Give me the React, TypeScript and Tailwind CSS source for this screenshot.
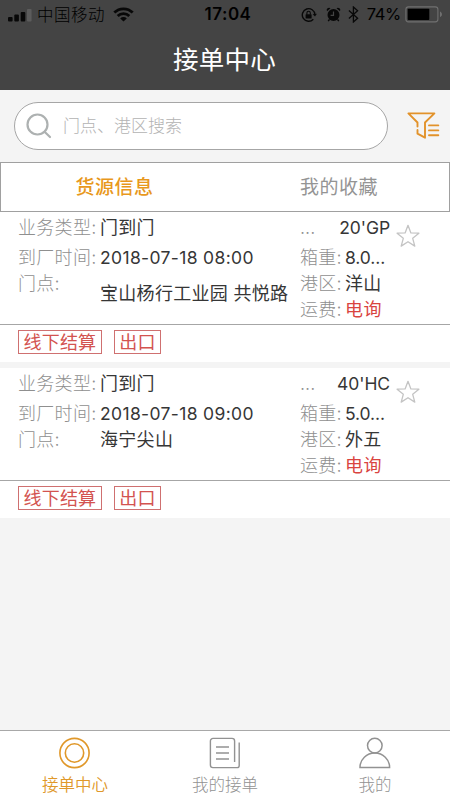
import type { ReactNode } from "react";
import clsx from "clsx";

type Order = {
  id: number;
  type: string;
  time: string;
  place: string;
  offset?: boolean;
  box: string;
  weight: string;
  port: string;
  fee: string;
  tags: string[];
};

const orders: Order[] = [
  {
    id: 1,
    type: "门到门",
    time: "2018-07-18 08:00",
    place: "宝山杨行工业园 共悦路",
    offset: true,
    box: "20'GP",
    weight: "8.0...",
    port: "洋山",
    fee: "电询",
    tags: ["线下结算", "出口"],
  },
  {
    id: 2,
    type: "门到门",
    time: "2018-07-18 09:00",
    place: "海宁尖山",
    box: "40'HC",
    weight: "5.0...",
    port: "外五",
    fee: "电询",
    tags: ["线下结算", "出口"],
  },
];

function StatusBar() {
  return (
    <div className="grid h-[29px] grid-cols-[1fr_auto_1fr] items-center pl-2 pr-[7px] text-[16.5px] text-black">
      <div className="flex items-center">
        <svg width="24" height="14" viewBox="0 0 24 14" fill="#080808">
          <rect x="0" y="9" width="4.6" height="4.5" rx="1" />
          <rect x="6.3" y="6.5" width="4.6" height="7" rx="1" />
          <rect x="12.7" y="4" width="4.6" height="9.5" rx="1" />
          <rect x="19" y="1" width="4.6" height="12.5" rx="1" fill="#5c5c5c" />
        </svg>
        <span className="ml-[5px] pt-0.5 font-light tracking-[0.5px]">中国移动</span>
        <svg className="ml-2" width="21" height="15" viewBox="0 0 21 15" fill="none" stroke="#080808" strokeWidth="2.8">
          <path d="M1.3 5.6a13 13 0 0 1 18.4 0" />
          <path d="M4.7 9.1a8.2 8.2 0 0 1 11.6 0" />
          <path d="M10.5 14.6 7.2 11.4a4.7 4.7 0 0 1 6.6 0Z" fill="#080808" stroke="none" />
        </svg>
      </div>
      <span className="pl-[5px] text-[17px] font-semibold tracking-[0.5px]">17:04</span>
      <div className="flex items-center justify-end">
        <svg width="16" height="16" viewBox="0 0 16 16" fill="none" stroke="#080808" strokeWidth="1.4">
          <path d="M12.3 12.2a6.3 6.3 0 1 1 1.6-4.6" />
          <path d="m11.7 7.2 2.3 2.4 1.9-2.8Z" fill="#080808" stroke="none" />
          <rect x="4.6" y="7.2" width="6" height="4.3" rx="0.6" fill="#080808" stroke="none" />
          <path d="M5.9 7.4V6a1.7 1.7 0 0 1 3.4 0v1.4" strokeWidth="1.1" />
        </svg>
        <svg className="ml-[9px]" width="15" height="15" viewBox="0 0 15 15" fill="#080808">
          <circle cx="7.5" cy="8" r="6" />
          <path d="M1 4.3A2.4 2.4 0 0 1 4.5 1.2ZM14 4.3a2.4 2.4 0 0 0-3.5-3.1Z" />
          <path d="m3.4 12.5-1.2 1.7M11.6 12.5l1.2 1.7" stroke="#080808" strokeWidth="1.4" />
          <path d="M7.5 4.4V8.3H4.6" fill="none" stroke="#444" strokeWidth="1.2" />
        </svg>
        <svg className="ml-[7px]" width="11" height="17" viewBox="0 0 11 17" fill="none" stroke="#080808" strokeWidth="1.3">
          <path d="M0.9 4.6 9.6 12.2 5.4 16V1l4.2 3.8L0.9 12.4" />
        </svg>
        <span className="ml-[8px] tracking-[-0.3px]">74%</span>
        <svg className="ml-1" width="38" height="17" viewBox="0 0 38 17">
          <rect x="0.9" y="0.9" width="32" height="15" rx="2.6" fill="none" stroke="#707070" strokeWidth="1.1" />
          <rect x="2.7" y="2.8" width="21.6" height="11.2" rx="0.8" fill="#000" />
          <path d="M35 5.6c2.6 1 2.6 4.6 0 5.6Z" fill="#707070" />
        </svg>
      </div>
    </div>
  );
}

function Label({ children }: { children: ReactNode }) {
  return <span className="font-light text-[#8f8f8f]">{children}</span>;
}

function Star() {
  return (
    <svg width="24" height="24" viewBox="0 0 24 24" fill="none" stroke="#c4c4c4" strokeWidth="1.3" strokeLinejoin="round">
      <path d="m12 1.3 2.9 7.6 8 .3-6.2 5.1 2.1 7.8-6.8-4.4-6.8 4.4 2.1-7.8L1.1 9.2l8-.3Z" />
    </svg>
  );
}

function OrderCard({ order }: { order: Order }) {
  return (
    <section className="h-[150px] bg-white">
      <div className="flex h-[113px] border-b border-[#a6a6a6] pl-[18px] text-[18px] leading-[26px] text-[#363636]">
        <div className="grid w-[282px] grid-cols-[82px_1fr] grid-rows-[30px_26px_26px] whitespace-nowrap pt-[3px] tracking-[0.3px]">
          <Label>业务类型:</Label>
          <span>{order.type}</span>
          <Label>到厂时间:</Label>
          <span className="text-[17.5px] tracking-[0.35px]">{order.time}</span>
          <Label>门点:</Label>
          <span className={clsx(order.offset && "pt-2.5")}>{order.place}</span>
        </div>
        <div className="w-[90px] pt-[3px]">
          <div className="flex h-[30px] justify-between">
            <Label>...</Label>
            <span className="text-[17.5px] tracking-[-0.1px]">{order.box}</span>
          </div>
          <div className="grid grid-cols-[45px_1fr] grid-rows-[26px_26px_26px] whitespace-nowrap tracking-[0.3px]">
            <Label>箱重:</Label>
            <span className="text-[17.5px] tracking-[-0.1px]">{order.weight}</span>
            <Label>港区:</Label>
            <span>{order.port}</span>
            <Label>运费:</Label>
            <span className="tracking-[0.6px] text-[#d9443f]">{order.fee}</span>
          </div>
        </div>
        <div className="ml-[6px] pt-3">
          <Star />
        </div>
      </div>
      <div className="flex gap-3 pl-[18px] pt-[5px]">
        {order.tags.map((tag) => (
          <span
            key={tag}
            className="flex h-6 items-center border border-[#cf7070] px-[4.5px] pt-px text-[18px] leading-none tracking-[0.2px] text-[#d35350]"
          >
            {tag}
          </span>
        ))}
      </div>
    </section>
  );
}

function NavItem({ label, active, children }: { label: string; active?: boolean; children: ReactNode }) {
  return (
    <div className={clsx("flex flex-col items-center pt-[5px]", active ? "text-[#e0982a]" : "text-[#929292]")}>
      {children}
      <span className={clsx("mt-[3px] text-[16.5px] leading-[24px]", active ? "font-[350]" : "font-light")}>{label}</span>
    </div>
  );
}

export default function App() {
  return (
    <div className="flex h-[800px] w-[450px] flex-col overflow-hidden bg-[#f4f4f4] font-['Inter','Noto_Sans_CJK_SC',sans-serif]">
      <header className="h-[90px] bg-[#444]">
        <StatusBar />
        <h1 className="mt-[12px] pr-px text-center text-[25.5px] leading-[38px] tracking-[0.2px] text-white">接单中心</h1>
      </header>

      <div className="flex h-[72px] items-center pl-[14px]">
        <div className="flex h-12 w-[374px] items-center rounded-full border border-[#a6a6a6] bg-white pl-[11px]">
          <svg width="26" height="26" viewBox="0 0 26 26" fill="none" stroke="#adb1b1" strokeWidth="2.2" strokeLinecap="round">
            <circle cx="11.5" cy="11.5" r="10" />
            <path d="m18.8 19 5.2 5" />
          </svg>
          <span className="ml-[11px] pt-0.5 text-[17px] font-light text-[#b3b3b3]">门点、港区搜索</span>
        </div>
        <svg
          className="ml-[18px]"
          width="35"
          height="30"
          viewBox="0 0 35 30"
          fill="none"
          stroke="#e2922a"
          strokeWidth="1.9"
          strokeLinecap="round"
          strokeLinejoin="round"
        >
          <path d="M11.5 15.5v-4L2.4 2.4h26L19 11.5v15.2l-7.5-4V19" />
          <path d="M23 14.4h9.3M23 19.4h9.3M23 24.2h9.3" />
        </svg>
      </div>

      <div className="grid h-[50px] grid-cols-2 border border-[#a0a0a0] bg-white pt-px text-center text-[19px] leading-[48px] tracking-[0.5px]">
        <span className="pl-[3px] font-medium text-[#e8981c]">货源信息</span>
        <span className="pl-1 text-[#949494]">我的收藏</span>
      </div>

      <main className="flex flex-1 flex-col gap-[6px]">
        {orders.map((order) => (
          <OrderCard key={order.id} order={order} />
        ))}
      </main>

      <nav className="grid h-[70px] grid-cols-3 border-t border-[#a8a8a8] bg-white">
        <NavItem label="接单中心" active>
          <svg width="34" height="34" viewBox="0 0 34 34" fill="none" stroke="currentColor" strokeWidth="1.6">
            <circle cx="16.5" cy="17" r="14.6" />
            <circle cx="16.5" cy="17" r="9.2" />
          </svg>
        </NavItem>
        <NavItem label="我的接单">
          <svg width="34" height="34" viewBox="0 0 34 34" fill="none" stroke="currentColor" strokeWidth="1.4">
            <path d="M26.6 26V5A2.6 2.6 0 0 0 24 2.4H5A2.6 2.6 0 0 0 2.4 5v24A2.6 2.6 0 0 0 5 31.6h24a2.2 2.2 0 0 0 2.2-2.2V6.5" />
            <path d="M8 11h13M8 17h13M8 23h13" />
          </svg>
        </NavItem>
        <NavItem label="我的">
          <svg width="34" height="34" viewBox="0 0 34 34" fill="none" stroke="currentColor" strokeWidth="1.5">
            <circle cx="16.8" cy="9.6" r="7.3" />
            <path d="M2 31.4a14.8 14.4 0 0 1 29.6 0Z" />
          </svg>
        </NavItem>
      </nav>
    </div>
  );
}
